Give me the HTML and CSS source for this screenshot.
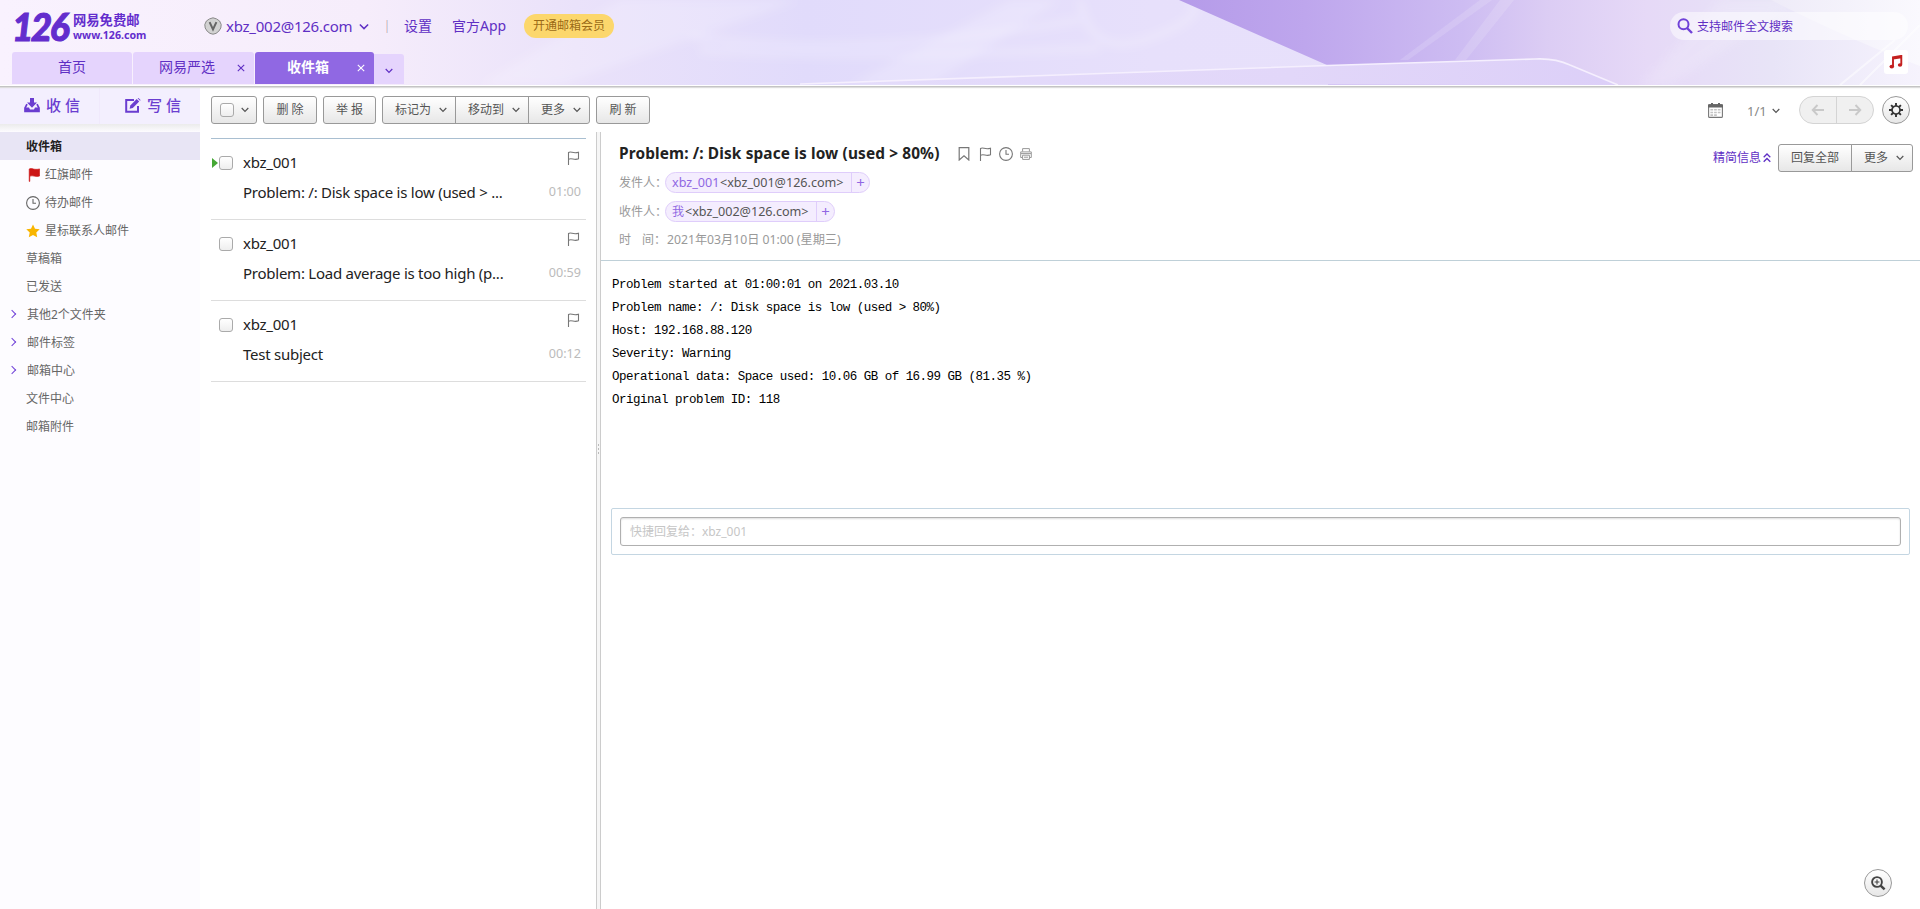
FILE: index.html
```html
<!DOCTYPE html>
<html lang="zh-CN">
<head>
<meta charset="utf-8">
<title>网易免费邮 - 收件箱</title>
<link rel="stylesheet" href="styles.css">
</head>
<body>
<svg class="defs" width="0" height="0">
  <symbol id="chev" viewBox="0 0 8 6"><path d="M.7 1 4 4.3 7.3 1" fill="none" stroke="currentColor" stroke-width="1.2"/></symbol>
  <symbol id="flag" viewBox="0 0 13 14"><path d="M1.5 14V1.5C4-.2 6 3 11.5 1.2V7.8C7 9.6 5 6.6 1.5 8.2" fill="none" stroke="currentColor" stroke-width="1.1"/></symbol>
  <symbol id="clock" viewBox="0 0 14 14"><circle cx="7" cy="7" r="6.4" fill="none" stroke="currentColor" stroke-width="1.1"/><path d="M7 3V7.3H10" fill="none" stroke="currentColor" stroke-width="1.1"/></symbol>
</svg>
<header class="header">
  <svg class="skin" viewBox="0 0 1920 85" preserveAspectRatio="none">
    <defs>
      <linearGradient id="base"><stop offset="0" stop-color="#f9f2fe"/><stop offset=".19" stop-color="#f6edfb"/><stop offset=".3" stop-color="#eae2fa"/><stop offset=".42" stop-color="#e1dbfb"/><stop offset=".6" stop-color="#e7e0fb"/><stop offset="1" stop-color="#e9e2fb"/></linearGradient>
      <linearGradient id="deep"><stop offset="0" stop-color="#b59be9"/><stop offset=".17" stop-color="#bea6ed"/><stop offset=".38" stop-color="#cdbcf2"/><stop offset=".5" stop-color="#dccdf4"/><stop offset=".63" stop-color="#e6d9f7"/><stop offset=".8" stop-color="#e8e4f7"/><stop offset="1" stop-color="#f6f3fd"/></linearGradient>
      <linearGradient id="low"><stop offset="0" stop-color="#e4dcfb"/><stop offset=".6" stop-color="#e2d7f9"/><stop offset="1" stop-color="#dccff8"/></linearGradient>
      <linearGradient id="pale"><stop offset="0" stop-color="#eeebf8"/><stop offset="1" stop-color="#faf9fe"/></linearGradient>
      <filter id="soft" x="-10%" y="-50%" width="120%" height="200%"><feGaussianBlur stdDeviation="5"/></filter>
    </defs>
    <rect width="1920" height="85" fill="url(#base)"/>
    <g filter="url(#soft)">
      <path d="M620 0 800 0 560 85H480ZM850 85 1010 0H1060L930 85Z" fill="#fff" opacity=".18"/>
      <path d="M690 36Q850 60 1080 20M700 50Q850 60 1100 48M1080 0Q1090 60 1150 38T1190 0" fill="none" stroke="#fff" stroke-width="6" opacity=".25"/>
    </g>
    <path d="M1179 0H1920V85H1328V65.5Z" fill="url(#deep)"/>
    <path d="M1480 0 1400 60H1408L1492 0ZM1500 0 1455 60H1466L1514 0Z" fill="#fff" opacity=".14"/>
    <path d="M1720 0 1640 85H1670L1800 0Z" fill="#fff" opacity=".14" filter="url(#soft)"/>
    <path d="M1771 0H1920V66Q1850 40 1771 0Z" fill="url(#pale)"/>
    <path d="M1840 85 1895 40M1860 85 1920 25" stroke="#fff" stroke-width="2" opacity=".5"/>
    <path d="M800 84 1328 65.5 1535 59Q1555 58 1570 65L1618 85Z" fill="url(#low)"/>
    <path d="M800 84 1328 65.5 1535 59Q1555 58 1570 65L1618 85" fill="none" stroke="#f5effe" stroke-width="1.6"/>
  </svg>
  <div class="topbar">
    <div class="logo"><b class="logo-num">126</b><span class="logo-txt"><b class="logo-cn">网易免费邮</b><b class="logo-url">www.126.com</b></span></div>
    <svg class="vip" viewBox="0 0 18 18"><path d="M9 .8 12.5 1.9 15.6 4 17.2 7.5 16.8 11 14.8 14.2 12 16.4 9 17.2 6 16.4 3.2 14.2 1.2 11 .8 7.5 2.4 4 5.5 1.9Z" fill="#d2d2d2" stroke="#888"/><path d="M5.6 5.2 9 12.5 12.4 5.2" fill="none" stroke="#666" stroke-width="2"/></svg>
    <span class="account">xbz_002@126.com</span>
    <svg class="acc-chev"><use href="#chev"/></svg>
    <i class="sep"></i>
    <a class="toplink set">设置</a><a class="toplink app">官方App</a><a class="member">开通邮箱会员</a>
    <div class="search"><svg width="16" height="16" viewBox="0 0 16 16"><circle cx="6.5" cy="6.3" r="5" fill="none" stroke="#7042d8" stroke-width="2"/><path d="m10 10 5 5" stroke="#7042d8" stroke-width="2.4"/></svg><span>支持邮件全文搜索</span></div>
  </div>
  <nav class="tabs">
    <a class="tab">首页</a>
    <a class="tab closable"><span>网易严选</span><svg class="x" viewBox="0 0 8 8"><path d="m.8.8 6.4 6.4M7.2.8.8 7.2" stroke="currentColor" stroke-width="1.1"/></svg></a>
    <a class="tab closable active"><span>收件箱</span><svg class="x" viewBox="0 0 8 8"><path d="m.8.8 6.4 6.4M7.2.8.8 7.2" stroke="currentColor" stroke-width="1.1"/></svg></a>
    <a class="tab-more"><svg width="8" height="6"><use href="#chev"/></svg></a>
    <span class="music"><svg width="14" height="14" viewBox="0 0 14 14"><path d="M4 11V2.3L12.3.9V9.8M4 3.6 12.3 2.2" fill="none" stroke="#c4201f" stroke-width="1.9"/><ellipse cx="2.8" cy="11.6" rx="2.3" ry="1.9" fill="#c4201f"/><ellipse cx="11" cy="10" rx="2.2" ry="1.8" fill="#c4201f"/></svg></span>
  </nav>
</header>
<div class="main">
  <aside class="side">
    <div class="actions">
      <a class="action recv"><svg width="16" height="15" viewBox="0 0 16 15"><path d="M6 0H10V4.5H13L8 9.7 3 4.5H6Z" fill="#6a3dd0"/><path d="M3 6.2 1 10V13.4H15V10L13 6.2" fill="none" stroke="#6a3dd0" stroke-width="1.7"/><path d="M1 9.6H5L6 11.5H10L11 9.6H15V14H1Z" fill="#6a3dd0"/></svg><span>收 信</span></a>
      <a class="action write"><svg width="16" height="15" viewBox="0 0 16 15"><path d="M9 1.9H1.2V13.8H13V8" fill="none" stroke="#6a3dd0" stroke-width="2"/><path d="M4.6 10.8 5.3 7.5 11.7 1.1 14.2 3.6 7.8 10Z" fill="#6a3dd0"/><path d="m12.6.3.8-.3L15.6 2 15 2.8Z" fill="#6a3dd0"/></svg><span>写 信</span></a>
    </div>
    <div class="shade"></div>
    <ul class="folders">
      <li class="cur">收件箱</li>
      <li class="sub"><svg width="14" height="14" viewBox="0 0 14 14"><path d="M3.2 1C6-.5 8 2.4 13.6 .9V8C9 9.6 7 6.8 3.8 8.2V13.4H3.2Z" fill="#cc1414" stroke="#cc1414" stroke-width=".6"/></svg>红旗邮件</li>
      <li class="sub gray"><svg width="14" height="14"><use href="#clock"/></svg>待办邮件</li>
      <li class="sub"><svg width="14" height="14" viewBox="0 0 14 14"><path d="m7 .4 2 4.3 4.7.6-3.4 3.3.9 4.7L7 11l-4.2 2.3.9-4.7L.3 5.3 5 4.7Z" fill="#f8b500"/></svg>星标联系人邮件</li>
      <li>草稿箱</li>
      <li>已发送</li>
      <li class="fold">其他2个文件夹</li>
      <li class="fold">邮件标签</li>
      <li class="fold">邮箱中心</li>
      <li>文件中心</li>
      <li>邮箱附件</li>
    </ul>
  </aside>
  <section class="work">
    <div class="toolbar">
      <a class="btn w46"><i class="check"></i><svg class="dd"><use href="#chev"/></svg></a>
      <a class="btn w54">删 除</a>
      <a class="btn w53">举 报</a>
      <div class="group"><a class="btn drop w74">标记为<svg class="dd"><use href="#chev"/></svg></a><a class="btn drop w74">移动到<svg class="dd"><use href="#chev"/></svg></a><a class="btn drop w62">更多<svg class="dd"><use href="#chev"/></svg></a></div>
      <a class="btn w54">刷 新</a>
      <div class="tool-right">
        <svg width="15" height="15" viewBox="0 0 15 15"><rect x=".6" y="1.6" width="13.8" height="12.8" rx="1" fill="#fff" stroke="#777" stroke-width="1.1"/><path d="M0 1.5H15V4.6H0ZM3 0H5V2H3ZM10 0H12V2H10Z" fill="#666"/><path d="M2.4 6.8H12.6M2.4 9.5H12.6M2.4 12.1H9" stroke="#c4c4c4" stroke-width="1.6" stroke-dasharray="2.7 1"/></svg>
        <span class="page">1/1</span><svg class="dd"><use href="#chev"/></svg>
        <div class="pager"><a><svg width="14" height="12" viewBox="0 0 14 12"><path d="M13 6H2M6.5 1 1.7 6 6.5 11" fill="none" stroke="#c9c9c9" stroke-width="1.9"/></svg></a><a><svg width="14" height="12" viewBox="0 0 14 12"><path d="M1 6H12M7.5 1 12.3 6 7.5 11" fill="none" stroke="#c9c9c9" stroke-width="1.9"/></svg></a></div>
        <a class="round"><svg width="14" height="14" viewBox="0 0 14 14"><circle cx="7" cy="7" r="4" fill="none" stroke="#333" stroke-width="1.7"/><path d="M7 0V3M7 11V14M0 7H3M11 7H14M2.1 2.1 4 4M10 10 11.9 11.9M2.1 11.9 4 10M10 4 11.9 2.1" stroke="#333" stroke-width="1.9"/></svg></a>
      </div>
    </div>
    <div class="panes">
      <div class="list">
        <article class="mail now"><i class="check"></i><div class="info"><span class="from">xbz_001</span><span class="subj">Problem: /: Disk space is low (used &gt; ...</span></div><div class="meta"><svg width="13" height="14"><use href="#flag"/></svg><time>01:00</time></div></article>
        <article class="mail"><i class="check"></i><div class="info"><span class="from">xbz_001</span><span class="subj">Problem: Load average is too high (p...</span></div><div class="meta"><svg width="13" height="14"><use href="#flag"/></svg><time>00:59</time></div></article>
        <article class="mail"><i class="check"></i><div class="info"><span class="from">xbz_001</span><span class="subj">Test subject</span></div><div class="meta"><svg width="13" height="14"><use href="#flag"/></svg><time>00:12</time></div></article>
      </div>
      <div class="split"><i></i><i></i><i></i></div>
      <div class="reader">
        <div class="head">
          <div class="head-main">
            <div class="title"><h1>Problem: /: Disk space is low (used &gt; 80%)</h1>
              <svg class="i1" width="12" height="14" viewBox="0 0 12 14"><path d="M1.2.6H10.8V13L6 8.8 1.2 13Z" fill="none" stroke="#777" stroke-width="1.2"/></svg>
              <svg class="i2" width="13" height="14"><use href="#flag"/></svg>
              <svg class="i3" width="14" height="14"><use href="#clock"/></svg>
              <svg class="i4" width="12" height="12" viewBox="0 0 12 12"><path d="M2.6 3.5V.6H9.4V3.5M2.5 9.5H.7V3.9H11.3V9.5H9.5M2.6 7.2H9.4V11.4H2.6ZM1 5.6H11M4 9.2H8" fill="none" stroke="#999" stroke-width="1"/></svg>
            </div>
            <div class="field"><label>发件人：</label><span class="chip"><em>xbz_001</em><span class="addr">&lt;xbz_001@126.com&gt;</span><b>+</b></span></div>
            <div class="field"><label>收件人：</label><span class="chip"><em class="me">我</em><span class="addr">&lt;xbz_002@126.com&gt;</span><b>+</b></span></div>
            <div class="field date"><label><span>时</span><span>间：</span></label><span class="when">2021年03月10日 01:00 (星期三)</span></div>
          </div>
          <div class="head-side"><a class="brief">精简信息<svg width="8" height="10" viewBox="0 0 8 10"><path d="M.7 4.3 4 1 7.3 4.3M.7 8.8 4 5.5 7.3 8.8" fill="none" stroke="currentColor" stroke-width="1.3"/></svg></a><div class="group"><a class="btn w74">回复全部</a><a class="btn drop w62">更多<svg class="dd"><use href="#chev"/></svg></a></div></div>
        </div>
        <pre class="body">Problem started at 01:00:01 on 2021.03.10
Problem name: /: Disk space is low (used &gt; 80%)
Host: 192.168.88.120
Severity: Warning
Operational data: Space used: 10.06 GB of 16.99 GB (81.35 %)
Original problem ID: 118</pre>
        <div class="reply"><div class="reply-in">快捷回复给：xbz_001</div></div>
        <a class="round zoom"><svg width="15" height="15" viewBox="0 0 15 15"><circle cx="6" cy="6" r="4.9" fill="none" stroke="#444" stroke-width="1.9"/><path d="M3.6 6H8.4M6 3.6V8.4" stroke="#444" stroke-width="1.1"/><path d="M9.6 9.6 13.6 13.4" stroke="#444" stroke-width="2.5"/></svg></a>
      </div>
    </div>
  </section>
</div>
</body>
</html>
```

FILE: styles.css
```css
* { box-sizing: border-box; }
html, body { margin: 0; height: 909px; overflow: hidden; }
body { display: flex; flex-direction: column; background: #fff; color: #555; font: 12px/16px "Noto Sans", "Noto Sans CJK SC", sans-serif; }
svg { display: block; flex: none; }
.defs { position: absolute; }
h1, ul, pre { margin: 0; padding: 0; }
em, i { font-style: normal; }

.header { position: relative; z-index: 1; height: 87px; flex: none; background: #fff; border-bottom: 1px solid #c4c4c4; box-shadow: 0 1px 1px #ddd; color: #5f2fc4; }
.skin { position: absolute; left: 0; top: 0; width: 1920px; height: 85px; }
.topbar { position: relative; height: 52px; display: flex; align-items: center; padding-left: 12px; }
.logo { display: flex; width: 192px; gap: 5px; padding-top: 2px; align-items: center; color: #632dcd; }
.logo-num { width: 56px; font: italic 900 37px/32px Lato, sans-serif; letter-spacing: -2.6px; -webkit-text-stroke: 1px #632dcd; }
.logo-txt { display: flex; flex-direction: column; white-space: nowrap; }
.logo-cn { font-size: 13.3px; line-height: 16px; }
.logo-url { font: 700 10.6px/15px "Noto Sans", sans-serif; }
.vip { width: 18px; height: 18px; }
.account { margin-left: 4px; font-size: 15px; line-height: 20px; width: 126px; white-space: nowrap; letter-spacing: -.25px; }
.acc-chev { width: 10px; height: 8px; margin-left: 7px; margin-top: 2px; }
.sep { width: 2px; height: 13px; margin-left: 17px; background: linear-gradient(90deg, #f3cfc8 50%, #c5d3ef 50%); }
.toplink { font-size: 14px; line-height: 20px; white-space: nowrap; }
.set { margin-left: 16px; width: 48px; }
.app { width: 72px; }
.member { width: 90px; height: 24px; border-radius: 12px; background: #fcd76c; color: #9a6a17; text-align: center; line-height: 24px; }
.search { margin-left: auto; margin-right: 12px; width: 238px; height: 28px; border-radius: 14px; background: rgba(255,255,255,.5); display: flex; align-items: center; gap: 4px; padding-left: 7px; }
.search span { padding-top: 2px; }

.tabs { position: relative; display: flex; height: 32px; padding-left: 12px; gap: 1px; font-size: 14px; }
.tab { width: 120px; height: 32px; line-height: 30px; text-align: center; background: #e5d4fd; border-radius: 3px 3px 0 0; }
.closable { width: 121px; display: flex; align-items: center; padding-left: 26px; }
.closable span { padding-bottom: 2px; }
.closable .x { width: 8px; height: 8px; margin-left: auto; margin-right: 9px; }
.active { width: 119px; background: #9068e3; color: #fff; font-weight: 700; padding-left: 32px; }
.tab-more { width: 30px; height: 30px; margin: 2px 0 0 -1px; background: #e5d4fd; border-radius: 0 3px 0 0; display: flex; align-items: center; justify-content: center; padding-top: 3px; }
.music { margin: -2px 12px 0 auto; width: 24px; height: 24px; background: #fff; border-radius: 3px; display: flex; align-items: center; justify-content: center; }

.main { flex: 1; display: flex; min-height: 0; }
.side { width: 200px; background: #fdfcff; }
.actions { height: 37px; display: flex; background: #f3effe; color: #6a3dd0; font-size: 15px; font-weight: 500; }
.action { display: flex; align-items: center; gap: 6px; width: 100px; white-space: nowrap; padding-bottom: 1px; }
.recv { padding-left: 24px; border-right: 1px solid #f0e9fc; }
.write { padding-left: 25px; }
.shade { height: 8px; background: linear-gradient(#ebebeb, #fdfcff); }
.folders { list-style: none; color: #666; }
.folders li { height: 28px; line-height: 28px; padding: 2px 0 0 26px; display: flex; align-items: center; gap: 5px; }
.folders .cur { background: #e8e5f5; color: #222; font-weight: 700; }
.gray svg { color: #666; }
.folders .fold { padding-left: 9px; gap: 9px; }
.fold::before { content: ""; width: 5px; height: 5px; margin-top: -3px; border: solid #7042d8; border-width: 1.5px 1.5px 0 0; transform: rotate(45deg); margin-right: 3px; }

.work { flex: 1; min-width: 0; display: flex; flex-direction: column; }
.toolbar { height: 45px; flex: none; display: flex; gap: 6px; padding: 9px 10px 0 11px; }
.btn { height: 28px; border: 1px solid #999; border-radius: 3px; background: linear-gradient(#fff, #e7e7e7); color: #555; display: flex; align-items: center; justify-content: center; white-space: nowrap; flex: none; }
.dd { width: 8px; height: 6px; color: #555; margin-left: 9px; }
.drop { padding-left: 4px; }
.drop .dd { margin-left: 8px; }
.w46 { width: 46px; } .w53 { width: 53px; } .w54 { width: 54px; } .w62 { width: 62px; } .w74 { width: 74px; }
.w46 .dd { margin-left: 7px; }
.group { display: flex; }
.group .btn + .btn { margin-left: -1px; border-radius: 0; }
.group .btn:first-child { border-radius: 3px 0 0 3px; }
.group .btn:last-child { border-radius: 0 3px 3px 0; }
.check { width: 14px; height: 14px; flex: none; border: 1px solid #aaa; border-radius: 3px; background: linear-gradient(#fff, #eee); }
.tool-right { margin-left: auto; display: flex; align-items: center; height: 28px; }
.page { margin-left: 24px; font-size: 13px; color: #888; width: 18px; padding-top: 2px; white-space: nowrap; }
.tool-right .dd { margin-left: 7px; margin-top: 2px; }
.pager { display: flex; width: 75px; height: 28px; margin: 0 8px 0 19px; border: 1px solid #d4d4d4; border-radius: 14px; background: #f0f0f0; }
.pager a { flex: 1; display: flex; align-items: center; justify-content: center; }
.pager a + a { border-left: 1px solid #d4d4d4; }
.round { width: 28px; height: 28px; border: 1px solid #999; border-radius: 50%; background: linear-gradient(#fff, #e7e7e7); display: flex; align-items: center; justify-content: center; }

.panes { flex: 1; display: flex; min-height: 0; }
.list { width: 375px; margin: 6px 10px 0 11px; border-top: 1px solid #a9bfd1; }
.mail { position: relative; height: 81px; border-bottom: 1px solid #ddd; display: flex; padding: 0 5px 0 8px; color: #222; }
.mail .check { margin-top: 17px; }
.now::before { content: ""; position: absolute; left: 1px; top: 19px; border: solid transparent; border-width: 5px 0 5px 6px; border-left-color: #45a835; }
.info { margin-left: 10px; padding-top: 13px; display: flex; flex-direction: column; gap: 10px; font-size: 15px; line-height: 20px; letter-spacing: -.25px; white-space: nowrap; }
.meta { margin-left: auto; padding-top: 12px; color: #bbb; font-size: 12.6px; display: flex; flex-direction: column; align-items: flex-end; gap: 19px; }
.meta svg { color: #777; margin-right: 1px; }
.split { width: 5px; background: #f6f6f6; border: solid #ccc; border-width: 0 1px; padding: 312px 0 0 1px; display: flex; flex-direction: column; gap: 2px; }
.split i { width: 1px; height: 2px; background: #bbb; }
.reader { position: relative; flex: 1; min-width: 0; }
.head { height: 129px; border-bottom: 1px solid #bfd0d8; display: flex; justify-content: space-between; padding: 12px 7px 0 18px; }
.title { display: flex; align-items: center; height: 20px; color: #777; }
h1 { font-size: 15.4px; line-height: 20px; color: #222; width: 321px; white-space: nowrap; letter-spacing: .13px; }
.i1 { margin-left: 18px; } .i2 { margin-left: 9px; } .i3 { margin-left: 7px; } .i4 { margin-left: 7px; }
.field { display: flex; align-items: center; height: 21px; margin-top: 8px; color: #999; }
.field label { width: 46px; white-space: nowrap; padding-top: 1px; }
.date { margin-top: 7px; }
.date label { width: 48px; display: flex; gap: 11px; }
.when { font-size: 12.2px; }
.chip { height: 21px; border: 1px solid #dfcdfb; border-radius: 11px; background: #f4edfe; display: flex; line-height: 19px; font-size: 12.6px; padding-left: 6px; color: #555; white-space: nowrap; }
.chip em { color: #9068e3; width: 48px; }
.chip .me { width: 13px; font-size: 12px; }
.addr { width: 131px; }
.chip b { width: 18px; border-left: 1px solid #dfcdfb; text-align: center; color: #9068e3; font-weight: 400; font-size: 15px; }
.head-side { display: flex; gap: 7px; height: 28px; align-items: center; }
.brief { display: flex; align-items: center; gap: 2px; color: #5f2fc4; }
.body { padding: 13px 0 0 11px; height: 247px; font: 12.5px/23px "Liberation Mono", monospace; letter-spacing: -.51px; color: #000; }
.reply { height: 47px; margin: 0 10px; border: 1px solid #c4d6e2; border-radius: 2px; padding: 8px; }
.reply-in { height: 29px; border: 1px solid #b0b0b0; border-radius: 3px; box-shadow: inset 0 1px 2px #ddd; padding-left: 9px; line-height: 27px; color: #c6c6c6; }
.zoom { position: absolute; right: 28px; bottom: 12px; }
```
